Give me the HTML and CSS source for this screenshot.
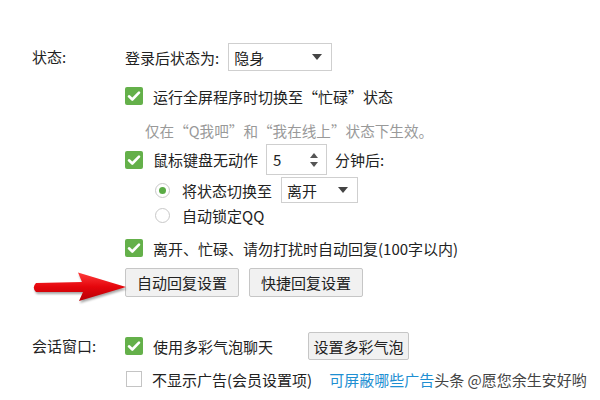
FILE: index.html
```html
<!DOCTYPE html>
<html lang="zh-CN">
<head>
  <meta charset="UTF-8">
  <title>状态设置</title>
  <link rel="stylesheet" href="styles.css">
</head>
<body>

  <!-- 状态 -->
  <section class="group status">
    <div class="label">状态:</div>
    <div class="content">
      <div class="row row-login">
        <span>登录后状态为:</span>
        <div class="select select-login"><span>隐身</span><i class="caret"></i></div>
      </div>

      <div class="row row-full">
        <span class="check on"><svg viewBox="0 0 18 18"><path d="M4 9.3l3.3 3.2L14 5.6" /></svg></span>
        <span>运行全屏程序时切换至“忙碌”状态</span>
      </div>
      <div class="row row-hint">仅在“Q我吧”和“我在线上”状态下生效。</div>

      <div class="row row-idle">
        <span class="check on"><svg viewBox="0 0 18 18"><path d="M4 9.3l3.3 3.2L14 5.6" /></svg></span>
        <span>鼠标键盘无动作</span>
        <div class="spin"><span>5</span><span class="arrows"><i class="up"></i><i class="down"></i></span></div>
        <span>分钟后:</span>
      </div>
      <div class="row row-radio row-switch">
        <span class="radio on"></span>
        <span>将状态切换至</span>
        <div class="select select-away"><span>离开</span><i class="caret"></i></div>
      </div>
      <div class="row row-radio row-lock">
        <span class="radio"></span>
        <span>自动锁定QQ</span>
      </div>

      <div class="row row-reply">
        <span class="check on"><svg viewBox="0 0 18 18"><path d="M4 9.3l3.3 3.2L14 5.6" /></svg></span>
        <span>离开、忙碌、请勿打扰时自动回复(100字以内)</span>
      </div>
      <div class="row row-buttons">
        <button class="btn btn-wide">自动回复设置</button>
        <button class="btn btn-wide">快捷回复设置</button>
      </div>
    </div>
  </section>

  <!-- 会话窗口 -->
  <section class="group chat">
    <div class="label">会话窗口:</div>
    <div class="content">
      <div class="row row-bubble">
        <span class="check on"><svg viewBox="0 0 18 18"><path d="M4 9.3l3.3 3.2L14 5.6" /></svg></span>
        <span class="bubble-text">使用多彩气泡聊天</span>
        <button class="btn">设置多彩气泡</button>
      </div>
      <div class="row row-ads">
        <span class="check"></span>
        <span>不显示广告(会员设置项)</span>
        <a class="link" href="#">可屏蔽哪些广告</a><span class="mark">头条 @愿您余生安好哟</span>
      </div>
    </div>
  </section>

  <!-- 标注箭头 -->
  <svg class="arrow" viewBox="0 0 100 34" width="100" height="34">
    <defs>
      <linearGradient id="red" x1="0" y1="0" x2="0" y2="1">
        <stop offset="0" stop-color="#ff3b3b" />
        <stop offset="0.5" stop-color="#e5060c" />
        <stop offset="1" stop-color="#b70006" />
      </linearGradient>
    </defs>
    <path d="M6 13 L52 12 L48 2.5 L96 17 L49 31 L53 22 L6 22 Q1.5 17.5 6 13 Z" fill="url(#red)" />
  </svg>

</body>
</html>
```

FILE: styles.css
```css
body {
  margin: 0;
  padding: 43px 0 0 32px;
  font-family: "Noto Sans CJK SC", "Noto Sans", sans-serif;
  font-size: 15px;
  color: #222;
  background: #fff;
  position: relative;
  width: 568px;
  height: 357px;
  overflow: hidden;
}

.group {
  display: flex;
}

.label {
  width: 93px;
  flex: none;
  height: 28px;
  line-height: 28px;
}

.content {
  display: flex;
  flex-direction: column;
}

.row {
  display: flex;
  align-items: center;
  height: 26px;
  white-space: nowrap;
}

.row-login { height: 28px; }
.row-login .select { margin-left: 9px; }

.row-full { margin-top: 12px; }

.row-hint {
  margin-top: 8px;
  padding-left: 20px;
  font-size: 14.6px;
  color: #999;
}

.row-idle { height: 31px; margin-top: 1px; }
.row-switch { height: 26px; margin-top: 2px; }
.row-lock { height: 24px; }
.row-reply { margin-top: 8px; }
.row-buttons { height: 29px; margin-top: 7px; gap: 10px; }

.chat { margin-top: 35px; }
.row-bubble { height: 28px; }
.row-ads { margin-top: 6px; }

/* checkbox */
.check {
  width: 16px;
  height: 16px;
  margin: 0 10px 0 1px;
  border: 1px solid #c4c4c4;
  background: #fff;
  flex: none;
  box-sizing: border-box;
}

.check.on {
  width: 18px;
  height: 18px;
  margin: 0 10px 0 0;
  border: none;
  border-radius: 2px;
  background: #64b04a;
}

.check svg {
  display: block;
  width: 18px;
  height: 18px;
  fill: none;
  stroke: #fff;
  stroke-width: 2.6;
  stroke-linecap: round;
  stroke-linejoin: round;
}

/* radio */
.row-radio { padding-left: 30px; }

.radio {
  width: 15px;
  height: 15px;
  box-sizing: border-box;
  border: 1px solid #c8c8c8;
  border-radius: 50%;
  background: #fff;
  margin-right: 12px;
  position: relative;
  flex: none;
}

.radio.on::after {
  content: "";
  position: absolute;
  left: 3px;
  top: 3px;
  width: 7px;
  height: 7px;
  border-radius: 50%;
  background: #5aab45;
}

/* select */
.select {
  display: flex;
  align-items: center;
  justify-content: space-between;
  box-sizing: border-box;
  border: 1px solid #cfcfcf;
  background: #fff;
  padding: 0 9px 0 5px;
}

.select-login { width: 104px; height: 28px; }
.select-away { width: 77px; height: 26px; margin-left: 9px; }

.caret {
  width: 0;
  height: 0;
  border-left: 5px solid transparent;
  border-right: 5px solid transparent;
  border-top: 6px solid #444;
}

/* spin */
.spin {
  display: flex;
  align-items: center;
  justify-content: space-between;
  box-sizing: border-box;
  width: 61px;
  height: 31px;
  margin: 0 8px 0 8px;
  padding: 0 8px 0 6px;
  border: 1px solid #cfcfcf;
  background: #fff;
}

.arrows {
  display: flex;
  flex-direction: column;
  gap: 4px;
}

.arrows i {
  width: 0;
  height: 0;
  border-left: 4px solid transparent;
  border-right: 4px solid transparent;
}

.arrows .up { border-bottom: 5px solid #555; }
.arrows .down { border-top: 5px solid #555; }

/* buttons */
.btn {
  height: 29px;
  font: inherit;
  color: #222;
  background: #f1f1f1;
  border: 1px solid #c6c6c6;
  border-radius: 2px;
  padding: 0 5px;
  cursor: pointer;
}

.btn-wide {
  width: 114px;
  padding: 0;
}

.row-bubble .btn {
  height: 28px;
  margin-left: 35px;
  width: 101px;
  padding: 0;
}

.link {
  margin-left: 17px;
  color: #1e8fd2;
  text-decoration: none;
}

.mark {
  color: #444;
  text-shadow: 0 0 2px #fff;
}

/* annotation */
.arrow {
  position: absolute;
  left: 30px;
  top: 270px;
  filter: drop-shadow(1px 2px 1px rgba(0, 0, 0, 0.35));
}
```
